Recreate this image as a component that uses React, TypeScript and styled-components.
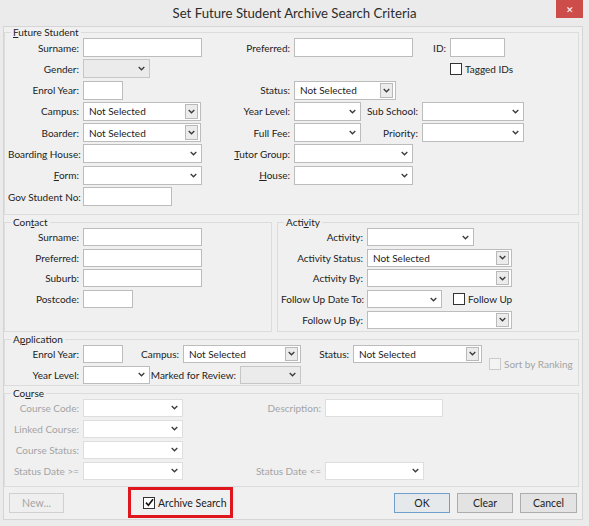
import React from "react";
import styled, { createGlobalStyle, css } from "styled-components";

// global reset
const GlobalStyle = createGlobalStyle`
  body {
    margin: 0;
    background: #ebebeb;
  }
`;

type Tone = "normal" | "grey" | "faded";

// small drawings

function Chevron() {
  return (
    <svg width="7" height="5" viewBox="0 0 7 5">
      <path d="M0.7 1 L3.5 3.8 L6.3 1" fill="none" stroke="#3a3a3a" strokeWidth="1.3" />
    </svg>
  );
}

function Tick() {
  return (
    <svg width="9" height="9" viewBox="0 0 9 9">
      <path d="M1 4.6 L3.4 7.2 L8 1.2" fill="none" stroke="#111" strokeWidth="1.6" />
    </svg>
  );
}

// controls

interface ComboProps {
  w: number;
  value?: string;
  btn?: boolean;
  tone?: Tone;
}

function Combo({ w, value, btn, tone = "normal" }: ComboProps) {
  return (
    <Box $w={w} $tone={tone}>
      <BoxText>{value}</BoxText>
      <ArrowCell $btn={btn}>
        <Chevron />
      </ArrowCell>
    </Box>
  );
}

interface CheckProps {
  label: string;
  checked?: boolean;
  disabled?: boolean;
}

function Check({ label, checked, disabled }: CheckProps) {
  return (
    <CheckWrap $dis={disabled}>
      <CheckBox $dis={disabled}>{checked && <Tick />}</CheckBox>
      {label}
    </CheckWrap>
  );
}

function App() {
  return (
    <>
      <GlobalStyle />
      <Window>
        <TitleBar>
          <Title>Set Future Student Archive Search Criteria</Title>
          <CloseButton>✕</CloseButton>
        </TitleBar>

        <Client>
          {/* Future Student */}
          <Group $pb={8}>
            <Legend>
              <u>F</u>uture Student
            </Legend>
            <Rows $gap={2.3}>
              <Row $h={19}>
                <Label $w={75}>Surname:</Label>
                <Box $w={119} />
                <Label $w={92}>Preferred:</Label>
                <Box $w={119} />
                <Label $w={37}>ID:</Label>
                <Box $w={55} />
              </Row>
              <Row $h={19}>
                <Label $w={75}>Gender:</Label>
                <Combo w={67} tone="grey" />
                <Spacer $w={300} />
                <Check label="Tagged IDs" />
              </Row>
              <Row $h={19}>
                <Label $w={75}>Enrol Year:</Label>
                <Box $w={40} />
                <Label $w={171}>Status:</Label>
                <Combo w={102} value="Not Selected" btn />
              </Row>
              <Row $h={19}>
                <Label $w={75}>Campus:</Label>
                <Combo w={118} value="Not Selected" btn />
                <Label $w={93}>Year Level:</Label>
                <Combo w={67} />
                <Label $w={61}>Sub School:</Label>
                <Combo w={102} />
              </Row>
              <Row $h={19}>
                <Label $w={75}>Boarder:</Label>
                <Combo w={118} value="Not Selected" btn />
                <Label $w={93}>Full Fee:</Label>
                <Combo w={67} />
                <Label $w={61}>Priority:</Label>
                <Combo w={102} />
              </Row>
              <Row $h={19}>
                <Label $w={75}>
                  Boardin<u>g</u> House:
                </Label>
                <Combo w={119} />
                <Label $w={92}>
                  <u>T</u>utor Group:
                </Label>
                <Combo w={119} />
              </Row>
              <Row $h={19}>
                <Label $w={75}>
                  <u>F</u>orm:
                </Label>
                <Combo w={119} />
                <Label $w={92}>
                  <u>H</u>ouse:
                </Label>
                <Combo w={119} />
              </Row>
              <Row $h={19}>
                <Label $w={75}>Gov Student No:</Label>
                <Box $w={89} />
              </Row>
            </Rows>
          </Group>

          {/* Contact + Activity */}
          <Split>
            <Group $w={268} $pb={2}>
              <Legend>
                Con<u>t</u>act
              </Legend>
              <Rows $gap={2.7}>
                <Row $h={18}>
                  <Label $w={75}>Surname:</Label>
                  <Box $w={119} />
                </Row>
                <Row $h={18}>
                  <Label $w={75}>Preferred:</Label>
                  <Box $w={119} />
                </Row>
                <Row $h={18}>
                  <Label $w={75}>Suburb:</Label>
                  <Box $w={119} />
                </Row>
                <Row $h={18}>
                  <Label $w={75}>Postcode:</Label>
                  <Box $w={50} />
                </Row>
              </Rows>
            </Group>
            <Group $grow $pb={2}>
              <Legend>
                Acti<u>v</u>ity
              </Legend>
              <Rows $gap={2.7}>
                <Row $h={18}>
                  <Label $w={86}>Activity:</Label>
                  <Combo w={107} />
                </Row>
                <Row $h={18}>
                  <Label $w={86}>Activity Status:</Label>
                  <Combo w={145} value="Not Selected" btn />
                </Row>
                <Row $h={18}>
                  <Label $w={86}>Activity By:</Label>
                  <Combo w={145} btn />
                </Row>
                <Row $h={18}>
                  <Label $w={86}>Follow Up Date To:</Label>
                  <Combo w={75} />
                  <Spacer $w={11} />
                  <Check label="Follow Up" />
                </Row>
                <Row $h={18}>
                  <Label $w={86}>Follow Up By:</Label>
                  <Combo w={145} btn />
                </Row>
              </Rows>
            </Group>
          </Split>

          {/* Application */}
          <Group $pb={1}>
            <Legend>
              A<u>p</u>plication
            </Legend>
            <AppBody>
              <Rows $gap={3}>
                <Row $h={18}>
                  <Label $w={75}>Enrol Year:</Label>
                  <Box $w={40} />
                  <Label $w={60}>Campus:</Label>
                  <Combo w={118} value="Not Selected" btn />
                  <Label $w={52}>Status:</Label>
                  <Combo w={129} value="Not Selected" btn />
                </Row>
                <Row $h={18}>
                  <Label $w={75}>Year Level:</Label>
                  <Combo w={67} />
                  <Label $w={90}>Marked for Review:</Label>
                  <Combo w={61} tone="grey" />
                </Row>
              </Rows>
              <SideCheck>
                <Check label="Sort by Ranking" disabled />
              </SideCheck>
            </AppBody>
          </Group>

          {/* Course */}
          <Group $pb={6}>
            <Legend>
              Co<u>u</u>rse
            </Legend>
            <Rows $gap={3}>
              <Row $h={18}>
                <Label $w={75} $dis>
                  Course Code:
                </Label>
                <Combo w={100} tone="faded" />
                <Label $w={142} $dis>
                  Description:
                </Label>
                <Box $w={118} $tone="faded" />
              </Row>
              <Row $h={18}>
                <Label $w={75} $dis>
                  Linked Course:
                </Label>
                <Combo w={100} tone="faded" />
              </Row>
              <Row $h={18}>
                <Label $w={75} $dis>
                  Course Status:
                </Label>
                <Combo w={100} tone="faded" />
              </Row>
              <Row $h={18}>
                <Label $w={75} $dis>
                  Status Date &gt;=
                </Label>
                <Combo w={100} tone="faded" />
                <Label $w={142} $dis>
                  Status Date &lt;=
                </Label>
                <Combo w={99} tone="faded" />
              </Row>
            </Rows>
          </Group>

          {/* buttons */}
          <Footer>
            <Button $w={55} $dis>
              New...
            </Button>
            <Highlight>
              <Check label="Archive Search" checked />
            </Highlight>
            <RightButtons>
              <Button $w={56} $default>
                OK
              </Button>
              <Button $w={56}>Clear</Button>
              <Button $w={57}>Cancel</Button>
            </RightButtons>
          </Footer>
        </Client>
      </Window>
    </>
  );
}

export default App;

// window frame

const Window = styled.div`
  width: 589px;
  height: 526px;
  background: #ebebeb;
  display: flex;
  flex-direction: column;
  font-family: Lato, "Noto Sans", sans-serif;
  font-size: 10px;
  color: #222;
`;

const TitleBar = styled.div`
  height: 26px;
  flex: none;
  display: grid;
  grid-template-columns: 1fr auto 1fr;
  align-items: start;
`;

const Title = styled.div`
  grid-column: 2;
  line-height: 26px;
  font-size: 13.2px;
  color: #2c2c2c;
`;

const CloseButton = styled.div`
  grid-column: 3;
  justify-self: end;
  margin-right: 6px;
  width: 27px;
  height: 18px;
  background: #cd4d4b;
  color: #fff;
  font-size: 9px;
  display: flex;
  align-items: center;
  justify-content: center;
`;

const Client = styled.div`
  height: 494px;
  box-sizing: border-box;
  margin: 0 6px 0 3px;
  border: 1px solid #d5d5d5;
  background: #f0f0f0;
  padding-right: 3px;
  display: flex;
  flex-direction: column;
`;

// group boxes

const Group = styled.fieldset<{ $w?: number; $grow?: boolean; $pb?: number }>`
  margin: 2px 0 0 0;
  min-width: 0;
  box-sizing: border-box;
  border: 1px solid #dcdcdc;
  padding: 0 3px ${(p) => p.$pb ?? 4}px 3px;
  ${(p) => p.$w && `width: ${p.$w}px; flex: none;`}
  ${(p) => p.$grow && `flex: 1;`}

  &:first-child {
    margin-top: 0;
  }
`;

const Legend = styled.legend`
  padding: 0 2px;
  margin-left: 3px;
  font-size: 10px;
  line-height: 11px;
  color: #222;
`;

const Split = styled.div`
  display: flex;
  gap: 5px;
  margin-top: 2px;

  ${Group} {
    margin-top: 0;
  }
`;

const Rows = styled.div<{ $gap: number }>`
  display: flex;
  flex-direction: column;
  gap: ${(p) => p.$gap}px;
`;

const Row = styled.div<{ $h: number }>`
  display: flex;
  align-items: center;
  height: ${(p) => p.$h}px;
`;

const Label = styled.span<{ $w: number; $dis?: boolean }>`
  flex: none;
  width: ${(p) => p.$w}px;
  box-sizing: border-box;
  padding-right: 4px;
  text-align: right;
  white-space: nowrap;
  color: ${(p) => (p.$dis ? "#a4a4a4" : "#222")};
`;

const Spacer = styled.span<{ $w: number }>`
  flex: none;
  width: ${(p) => p.$w}px;
`;

// fields

const Box = styled.div<{ $w: number; $tone?: Tone }>`
  flex: none;
  width: ${(p) => p.$w}px;
  height: 100%;
  box-sizing: border-box;
  display: flex;
  align-items: center;
  padding-left: 5px;
  background: ${(p) => (p.$tone === "grey" ? "#ebebeb" : "#fff")};
  border: 1px solid
    ${(p) =>
      p.$tone === "faded" ? "#dedede" : p.$tone === "grey" ? "#c6c6c6" : "#bcbcbc"};
`;

const BoxText = styled.span`
  flex: 1;
  white-space: nowrap;
  overflow: hidden;
  color: #222;
`;

const ArrowCell = styled.span<{ $btn?: boolean }>`
  flex: none;
  align-self: stretch;
  display: flex;
  align-items: center;
  justify-content: center;
  width: 15px;
  ${(p) =>
    p.$btn &&
    css`
      width: 13px;
      box-sizing: border-box;
      margin: 1px 2px 1px 0;
      border: 1px solid #b9b9b9;
      background: #ececec;
    `}
`;

const CheckWrap = styled.label<{ $dis?: boolean }>`
  display: inline-flex;
  align-items: center;
  gap: 3px;
  white-space: nowrap;
  color: ${(p) => (p.$dis ? "#a4a4a4" : "#222")};
`;

const CheckBox = styled.span<{ $dis?: boolean }>`
  flex: none;
  width: 12px;
  height: 12px;
  box-sizing: border-box;
  display: inline-flex;
  align-items: center;
  justify-content: center;
  border: 1px solid ${(p) => (p.$dis ? "#cccccc" : "#333")};
  background: ${(p) => (p.$dis ? "#f3f3f3" : "#fff")};
`;

const AppBody = styled.div`
  display: flex;
`;

const SideCheck = styled.div`
  align-self: center;
  margin-left: 7px;
  padding-top: 2px;
`;

// footer

const Footer = styled.div`
  flex: 1;
  display: flex;
  align-items: center;
  padding: 0 2px 0 5px;
`;

const Highlight = styled.div`
  margin-left: 64px;
  width: 105px;
  height: 31px;
  box-sizing: border-box;
  border: 3px solid #e0161e;
  display: flex;
  align-items: center;
  padding-left: 12px;
  font-size: 10.5px;
`;

const RightButtons = styled.div`
  margin-left: auto;
  display: flex;
  gap: 7px;
`;

const Button = styled.div<{ $w: number; $dis?: boolean; $default?: boolean }>`
  width: ${(p) => p.$w}px;
  height: 20px;
  box-sizing: border-box;
  display: flex;
  align-items: center;
  justify-content: center;
  font-size: 10.5px;
  background: #e3e3e3;
  border: 1px solid #adadad;
  color: #222;
  ${(p) =>
    p.$default &&
    css`
      border-color: #6f9fcb;
      background: #e6e9ec;
    `}
  ${(p) =>
    p.$dis &&
    css`
      background: #efefef;
      border-color: #d0d0d0;
      color: #a4a4a4;
    `}
`;
